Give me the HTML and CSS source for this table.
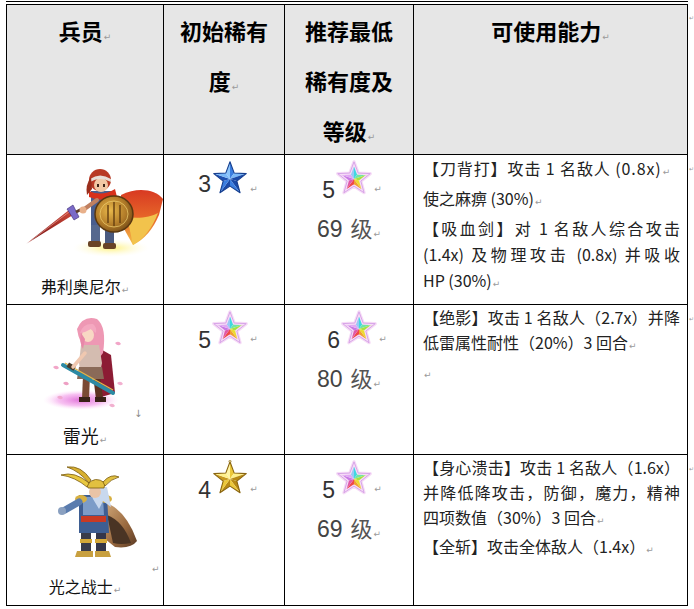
FILE: index.html
```html
<!DOCTYPE html>
<html lang="zh-CN">
<head>
<meta charset="utf-8">
<title>兵员</title>
<link rel="stylesheet" href="styles.css">
</head>
<body>
<svg class="defs" aria-hidden="true">
  <defs>
    <symbol id="s-blue" viewBox="0 0 40 40">
      <polygon points="20,21 20,2 24.7,14.53" fill="#3a7ee0"/>
      <polygon points="20,21 24.7,14.53 38.07,15.13" fill="#7ab8f8"/>
      <polygon points="20,21 38.07,15.13 27.61,23.47" fill="#1a4aa8"/>
      <polygon points="20,21 27.61,23.47 31.17,36.37" fill="#1a4aa8"/>
      <polygon points="20,21 31.17,36.37 20,29" fill="#3a7ee0"/>
      <polygon points="20,21 20,29 8.83,36.37" fill="#1a4aa8"/>
      <polygon points="20,21 8.83,36.37 12.39,23.47" fill="#3a7ee0"/>
      <polygon points="20,21 12.39,23.47 1.93,15.13" fill="#1f50b0"/>
      <polygon points="20,21 1.93,15.13 15.3,14.53" fill="#7ab8f8"/>
      <polygon points="20,21 15.3,14.53 20,2" fill="#8cc4fa"/>
      <path d="M20 2 L24.7 14.53 L38.07 15.13 L27.61 23.47 L31.17 36.37 L20 29 L8.83 36.37 L12.39 23.47 L1.93 15.13 L15.3 14.53 Z" fill="none" stroke="#163f8f" stroke-width="1.2" stroke-linejoin="round"/>
    </symbol>
    <symbol id="s-gold" viewBox="0 0 40 40">
      <polygon points="20,21 20,2 24.7,14.53" fill="#ecc83a"/>
      <polygon points="20,21 24.7,14.53 38.07,15.13" fill="#fff08a"/>
      <polygon points="20,21 38.07,15.13 27.61,23.47" fill="#b88a14"/>
      <polygon points="20,21 27.61,23.47 31.17,36.37" fill="#b88a14"/>
      <polygon points="20,21 31.17,36.37 20,29" fill="#ecc83a"/>
      <polygon points="20,21 20,29 8.83,36.37" fill="#b88a14"/>
      <polygon points="20,21 8.83,36.37 12.39,23.47" fill="#ecc83a"/>
      <polygon points="20,21 12.39,23.47 1.93,15.13" fill="#c89a20"/>
      <polygon points="20,21 1.93,15.13 15.3,14.53" fill="#fff08a"/>
      <polygon points="20,21 15.3,14.53 20,2" fill="#fff4a4"/>
      <path d="M20 2 L24.7 14.53 L38.07 15.13 L27.61 23.47 L31.17 36.37 L20 29 L8.83 36.37 L12.39 23.47 L1.93 15.13 L15.3 14.53 Z" fill="none" stroke="#8a6510" stroke-width="1.2" stroke-linejoin="round"/>
      <circle cx="20" cy="1.6" r="1.3" fill="none" stroke="#9a7a20" stroke-width=".8"/>
    </symbol>
    <symbol id="s-rain" viewBox="0 0 40 40">
      <polygon points="20,21 20,2 24.7,14.53" fill="#40d8e0"/>
      <polygon points="20,21 24.7,14.53 38.07,15.13" fill="#70e4a8"/>
      <polygon points="20,21 38.07,15.13 27.61,23.47" fill="#a8e040"/>
      <polygon points="20,21 27.61,23.47 31.17,36.37" fill="#ecdc30"/>
      <polygon points="20,21 31.17,36.37 20,29" fill="#f0a030"/>
      <polygon points="20,21 20,29 8.83,36.37" fill="#f04848"/>
      <polygon points="20,21 8.83,36.37 12.39,23.47" fill="#e058a8"/>
      <polygon points="20,21 12.39,23.47 1.93,15.13" fill="#c878e4"/>
      <polygon points="20,21 1.93,15.13 15.3,14.53" fill="#e0a8f4"/>
      <polygon points="20,21 15.3,14.53 20,2" fill="#98c8f4"/>
      <path d="M20 2 L24.7 14.53 L38.07 15.13 L27.61 23.47 L31.17 36.37 L20 29 L8.83 36.37 L12.39 23.47 L1.93 15.13 L15.3 14.53 Z" fill="none" stroke="#f6dcf6" stroke-width="3.6" stroke-linejoin="round"/>
      <path d="M20 2 L24.7 14.53 L38.07 15.13 L27.61 23.47 L31.17 36.37 L20 29 L8.83 36.37 L12.39 23.47 L1.93 15.13 L15.3 14.53 Z" fill="none" stroke="#d49ee6" stroke-width="1" stroke-linejoin="round"/>
    </symbol>
  </defs>
</svg>

<div class="prev"></div>
<div class="tbl">
  <div class="c h c1">兵员<span class="pm">↵</span></div>
  <div class="c h">初始稀有<br>度<span class="pm">↵</span></div>
  <div class="c h">推荐最低<br>稀有度及<br>等级<span class="pm">↵</span></div>
  <div class="c h">可使用能力<span class="pm">↵</span></div>
  <div class="end">↵</div>

  <!-- 弗利奥尼尔 -->
  <div class="c c1 unit">
    <svg class="sprite" width="156" height="118" viewBox="0 0 156 118">
      <defs>
        <linearGradient id="cape1" x1="0" y1="0" x2="0" y2="1">
          <stop offset="0" stop-color="#d83a22"/>
          <stop offset=".55" stop-color="#e86a2a"/>
          <stop offset="1" stop-color="#f3c24a"/>
        </linearGradient>
        <radialGradient id="shield1" cx=".4" cy=".4" r=".7">
          <stop offset="0" stop-color="#e8b84a"/>
          <stop offset=".6" stop-color="#b07a28"/>
          <stop offset="1" stop-color="#6a4314"/>
        </radialGradient>
        <linearGradient id="blade1" x1="0" y1="1" x2="1" y2="0">
          <stop offset="0" stop-color="#f0d0d0"/>
          <stop offset=".15" stop-color="#7a1414"/>
          <stop offset="1" stop-color="#d04a3a"/>
        </linearGradient>
        <radialGradient id="glow1">
          <stop offset="0" stop-color="#fff27a"/>
          <stop offset="1" stop-color="#fffbe0" stop-opacity="0"/>
        </radialGradient>
      </defs>
      <ellipse cx="104" cy="93" rx="38" ry="9" fill="url(#glow1)"/>
      <path d="M114 40 C130 32 148 34 156 44 L152 60 C146 74 138 84 126 90 L116 72 Z" fill="url(#cape1)"/>
      <path d="M120 62 C132 64 144 62 151 58 C145 74 136 84 126 90 Z" fill="#f2c34c"/>
      <rect x="84" y="66" width="9" height="22" fill="#56688e"/>
      <rect x="98" y="66" width="9" height="24" fill="#4a5a80"/>
      <rect x="81" y="86" width="13" height="6" rx="2" fill="#6a4426"/>
      <rect x="96" y="88" width="13" height="6" rx="2" fill="#6a4426"/>
      <path d="M84 36 L106 36 L108 70 L84 70 Z" fill="#4a5e8e"/>
      <path d="M82 36 Q95 42 108 34 L110 42 Q96 48 82 42 Z" fill="#d8301a"/>
      <line x1="76" y1="55" x2="90" y2="45" stroke="#c08060" stroke-width="4" stroke-linecap="round"/>
      <polygon points="19,89 62,55 66,60" fill="url(#blade1)"/>
      <line x1="22" y1="87" x2="62" y2="57" stroke="#f4b0a8" stroke-width=".6"/>
      <polygon points="60,54 66,50 72,62 67,65" fill="#7a6ac8" stroke="#3a2a70" stroke-width=".6"/>
      <line x1="69" y1="57" x2="77" y2="53" stroke="#5a3a2a" stroke-width="3"/>
      <circle cx="76" cy="55" r="3.5" fill="#e8b08a"/>
      <circle cx="93" cy="25" r="11" fill="#b83a24"/>
      <ellipse cx="94" cy="30" rx="7" ry="7" fill="#f2c8a4"/>
      <path d="M83 24 Q93 17 104 24 L104 27 Q93 21 83 27 Z" fill="#e6ded6"/>
      <rect x="90" y="29" width="2" height="3" fill="#3a2418"/>
      <rect x="96" y="29" width="2" height="3" fill="#3a2418"/>
      <path d="M84 22 Q78 30 80 40 L85 34 Z" fill="#9a2e1c"/>
      <ellipse cx="107" cy="59" rx="19" ry="18" fill="url(#shield1)" stroke="#5a3810" stroke-width="1.5"/>
      <ellipse cx="107" cy="59" rx="14" ry="13" fill="none" stroke="#f0d070" stroke-width="1" opacity=".7"/>
      <path d="M101 50 L101 68 M107 47 L107 71 M113 50 L113 68" stroke="#6a4312" stroke-width="1.5"/>
    </svg>
    <div class="name">弗利奥尼尔<span class="pm">↵</span></div>
  </div>
  <div class="c rare">
    <div class="rank"><span class="num up">3</span><svg class="star" viewBox="0 0 40 40"><use href="#s-blue"/></svg><span class="pm">↵</span></div>
  </div>
  <div class="c rare">
    <div class="rank r3"><span class="num">5</span><svg class="star" viewBox="0 0 40 40"><use href="#s-rain"/></svg><span class="pm">↵</span></div>
    <div class="lv"><span class="d">69</span><span class="k">级</span><span class="pm">↵</span></div>
  </div>
  <div class="c skill tall">
    <div class="ln sp">【刀背打】攻击 1 名敌人 (0.8x)<span class="pm">↵</span></div>
    <div class="ln">使之麻痹 (30%)<span class="pm">↵</span></div>
    <div class="ln j">【吸血剑】对 1 名敌人综合攻击</div>
    <div class="ln j">(1.4x) 及物理攻击 (0.8x) 并吸收</div>
    <div class="ln">HP (30%)<span class="pm">↵</span></div>
  </div>
  <div class="end">↵</div>

  <!-- 雷光 -->
  <div class="c c1 unit">
    <svg class="sprite" width="156" height="118" viewBox="0 0 156 118">
      <defs>
        <radialGradient id="aura2">
          <stop offset="0" stop-color="#e070d8"/>
          <stop offset=".6" stop-color="#f4a8ec" stop-opacity=".7"/>
          <stop offset="1" stop-color="#ffe0fa" stop-opacity="0"/>
        </radialGradient>
      </defs>
      <ellipse cx="74" cy="95" rx="38" ry="10" fill="url(#aura2)"/>
      <path d="M108 38 q4 -3 6 1 q-3 3 -6 -1z" fill="#f2a6c8"/>
      <path d="M46 62 q4 -3 6 1 q-3 3 -6 -1z" fill="#f2a6c8"/>
      <path d="M56 78 q4 -3 6 1 q-3 3 -6 -1z" fill="#eea0c4"/>
      <path d="M110 78 q4 -3 6 1 q-3 3 -6 -1z" fill="#f2b0d0"/>
      <path d="M102 100 q4 -3 6 1 q-3 3 -6 -1z" fill="#f2b0d0"/>
      <path d="M50 92 q4 -3 6 1 q-3 3 -6 -1z" fill="#f0a8d0"/>
      <path d="M90 42 L104 50 L108 88 L94 92 L88 70 Z" fill="#8c1c34"/>
      <path d="M70 24 Q76 10 90 14 Q100 22 96 48 L90 56 L82 46 Q72 40 70 24 Z" fill="#ee98b4"/>
      <path d="M76 70 L83 70 L82 94 L75 94 Z" fill="#7a4a34"/>
      <path d="M86 70 L93 70 L96 93 L89 94 Z" fill="#5e3222"/>
      <rect x="72" y="92" width="11" height="5" fill="#3a2218"/>
      <rect x="88" y="92" width="11" height="5" fill="#3a2218"/>
      <path d="M74 40 L92 40 L95 58 L92 72 L74 72 L72 58 Z" fill="#d4bcb0"/>
      <path d="M72 62 L95 62 L97 74 L70 74 Z" fill="#8a6a58"/>
      <ellipse cx="81" cy="30" rx="6" ry="7" fill="#f8d8c4"/>
      <path d="M73 28 Q76 18 86 19 Q90 22 89 28 L84 24 L78 27 Z" fill="#f4a8c0"/>
      <path d="M74 28 Q72 38 76 44 L78 34 Z" fill="#e888a8"/>
      <line x1="56" y1="60" x2="106" y2="88" stroke="#2c8aa4" stroke-width="4" stroke-linecap="round"/>
      <line x1="58" y1="58" x2="106" y2="85" stroke="#e2b64a" stroke-width="1.2"/>
      <rect x="62" y="58" width="5" height="8" fill="#4a3a2a" transform="rotate(-60 64 62)"/>
      <line x1="66" y1="62" x2="78" y2="48" stroke="#f0c8b0" stroke-width="3.5" stroke-linecap="round"/>
      <text x="127" y="112" font-family="DejaVu Sans" font-size="10" fill="#888">↓</text>
    </svg>
    <div class="name big">雷光<span class="pm">↵</span></div>
  </div>
  <div class="c rare">
    <div class="rank"><span class="num">5</span><svg class="star" viewBox="0 0 40 40"><use href="#s-rain"/></svg><span class="pm">↵</span></div>
  </div>
  <div class="c rare">
    <div class="rank r3b"><span class="num">6</span><svg class="star" viewBox="0 0 40 40"><use href="#s-rain"/></svg><span class="pm">↵</span></div>
    <div class="lv"><span class="d">80</span><span class="k">级</span><span class="pm">↵</span></div>
  </div>
  <div class="c skill">
    <div class="ln j">【绝影】攻击 1 名敌人（2.7x）并降</div>
    <div class="ln">低雷属性耐性（20%）3 回合<span class="pm">↵</span></div>
    <div class="ln"><span class="pm">↵</span></div>
  </div>
  <div class="end">↵</div>

  <!-- 光之战士 -->
  <div class="c c1 unit last">
    <svg class="sprite" width="156" height="118" viewBox="0 0 156 118">
      <defs>
        <linearGradient id="cape3" x1="0" y1="0" x2="1" y2="1">
          <stop offset="0" stop-color="#d8b080"/>
          <stop offset=".6" stop-color="#9a6a40"/>
          <stop offset="1" stop-color="#5a3a24"/>
        </linearGradient>
      </defs>
      <path d="M94 46 Q118 52 130 86 Q124 94 108 92 L98 84 L94 64 Z" fill="url(#cape3)"/>
      <path d="M100 60 Q116 66 124 88 Q114 90 106 88 Z" fill="#4a3424"/>
      <rect x="74" y="76" width="10" height="22" fill="#3a3c4a"/>
      <rect x="89" y="76" width="10" height="22" fill="#34364a"/>
      <rect x="73" y="84" width="12" height="4" fill="#d4a838"/>
      <rect x="88" y="84" width="12" height="4" fill="#d4a838"/>
      <path d="M70 96 L86 96 L86 102 L68 102 Z" fill="#c8a040"/>
      <path d="M88 96 L102 96 L104 102 L88 102 Z" fill="#c8a040"/>
      <path d="M72 40 L100 40 L102 78 L72 78 Z" fill="#3e5e92"/>
      <path d="M76 42 L96 42 L97 60 L76 60 Z" fill="#7c9cc8"/>
      <rect x="74" y="61" width="25" height="6" fill="#c83a24"/>
      <ellipse cx="74" cy="44" rx="6" ry="4" fill="#d8b040"/>
      <ellipse cx="99" cy="44" rx="6" ry="4" fill="#d8b040"/>
      <line x1="72" y1="47" x2="58" y2="55" stroke="#5a7cae" stroke-width="7" stroke-linecap="round"/>
      <circle cx="55" cy="56" r="4" fill="#8aa0c0"/>
      <path d="M82 32 L100 32 L104 52 L96 46 L92 54 L86 44 Z" fill="#c8d8ee"/>
      <ellipse cx="88" cy="37" rx="6" ry="6" fill="#eac4a6"/>
      <path d="M80 30 Q88 20 98 28 L97 33 L81 33 Z" fill="#e2c040" stroke="#7a5a10" stroke-width=".8"/>
      <path d="M82 28 Q68 16 54 20 Q68 22 80 32 Z" fill="#e8c840" stroke="#7a5a10" stroke-width=".8"/>
      <path d="M84 25 Q74 10 60 12 Q72 16 82 28 Z" fill="#d8b030" stroke="#7a5a10" stroke-width=".8"/>
      <path d="M96 27 Q104 18 112 22 Q104 24 98 31 Z" fill="#e0c040" stroke="#7a5a10" stroke-width=".8"/>
      <path d="M88 22 L90 15 L92 22 Z" fill="#ffffff"/>
      <text x="145" y="117" font-family="DejaVu Sans" font-size="9" fill="#999">↵</text>
    </svg>
    <div class="name">光之战士<span class="pm">↵</span></div>
  </div>
  <div class="c rare">
    <div class="rank"><span class="num">4</span><svg class="star" viewBox="0 0 40 40"><use href="#s-gold"/></svg><span class="pm">↵</span></div>
  </div>
  <div class="c rare">
    <div class="rank r3"><span class="num">5</span><svg class="star" viewBox="0 0 40 40"><use href="#s-rain"/></svg><span class="pm">↵</span></div>
    <div class="lv"><span class="d">69</span><span class="k">级</span><span class="pm">↵</span></div>
  </div>
  <div class="c skill">
    <div class="ln j">【身心溃击】攻击 1 名敌人（1.6x）</div>
    <div class="ln j">并降低降攻击，防御，魔力，精神</div>
    <div class="ln">四项数值（30%）3 回合<span class="pm">↵</span></div>
    <div class="ln">【全斩】攻击全体敌人（1.4x）<span class="pm">↵</span></div>
  </div>
  <div class="end">↵</div>
</div>
</body>
</html>
```

FILE: styles.css
```css
* { box-sizing: border-box; }
html, body { margin: 0; padding: 0; background: #fff; }
body {
  font-family: "Noto Sans CJK SC", "Noto Sans", sans-serif;
  color: #222;
  overflow: hidden;
}
.defs { position: absolute; width: 0; height: 0; overflow: hidden; }

.prev { width: 682px; height: 1px; background: #000; margin: 1px 0 2px 6px; }

.tbl {
  display: grid;
  grid-template-columns: 158px 121px 129px 274px 6px;
  grid-template-rows: 151px 150px 150px 151px;
  margin-left: 6px;
}
.c { border-right: 1px solid #000; border-bottom: 1px solid #000; }
.c1 { border-left: 1px solid #000; }
.h {
  border-top: 1px solid #000;
  background: #e6e6e6;
  font-weight: 700;
  font-size: 22px;
  line-height: 50px;
  text-align: center;
  color: #000;
}
.pm {
  font-family: "DejaVu Sans", sans-serif;
  font-size: 9px;
  color: #9a9a9a;
  font-weight: 400;
  margin-left: 1px;
}
.end {
  font-family: "DejaVu Sans", sans-serif;
  font-size: 6px;
  line-height: 7px;
  color: #9a9a9a;
  padding: 10px 0 0 1px;
  overflow: hidden;
}

.unit { display: flex; flex-direction: column; align-items: center; padding-bottom: 3px; }
.unit.last { padding-bottom: 4px; }
.sprite { display: block; }
.name { margin-top: auto; font-size: 16px; line-height: 22px; color: #111; }
.name.big { font-size: 18px; }

.rare { padding-top: 3px; }
.rank {
  display: flex;
  justify-content: center;
  align-items: flex-end;
  height: 40px;
  padding-left: 8px;
}
.rank.r3 { padding-left: 6px; }
.rank.r3b { padding-left: 16px; }
.num {
  font-family: "Liberation Sans", Arial, sans-serif;
  font-size: 23px;
  line-height: 23px;
  color: #333;
  margin-bottom: -4px;
}
.num.up { margin-bottom: 2px; }
.star { display: block; width: 36px; height: 40px; margin-left: 1px; }
.rank .pm { line-height: 9px; margin: 0 0 4px 2px; }
.lv { margin-top: 14px; line-height: 30px; text-align: center; }
.lv .d { font-family: "Liberation Sans", Arial, sans-serif; font-size: 23px; color: #444; }
.lv .k { font-size: 22px; color: #555; margin-left: 8px; }

.skill { padding: 0 7px 0 9px; font-size: 16px; line-height: 25px; color: #222; }
.skill.tall { line-height: 26px; }
.ln { white-space: nowrap; }
.ln.sp { letter-spacing: 0.9px; }
.j { text-align: justify; text-align-last: justify; }
```
